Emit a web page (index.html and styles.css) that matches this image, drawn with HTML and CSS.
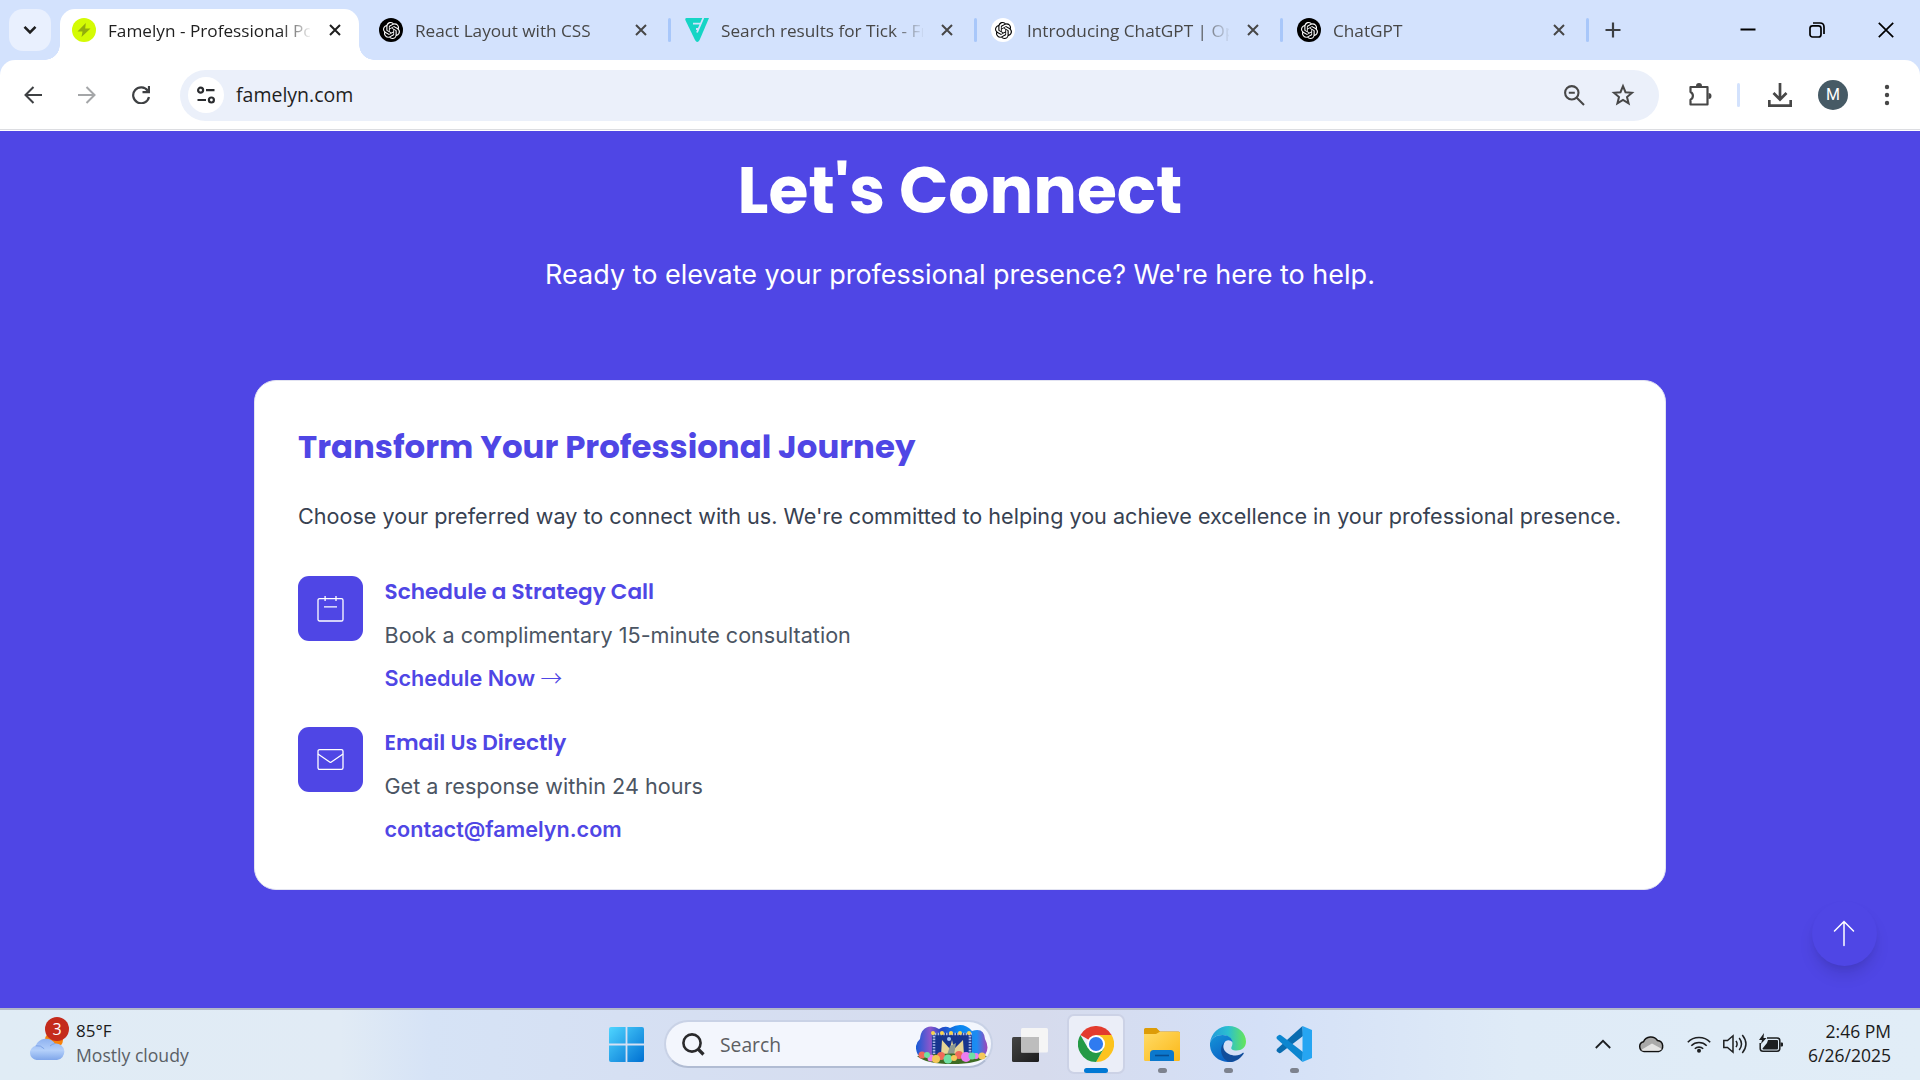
FILE: index.html
```html
<!DOCTYPE html>
<html lang="en">
<head>
<meta charset="utf-8">
<title>Famelyn - Professional Portfolio</title>
<link rel="stylesheet" href="styles.css">
</head>
<body>
<svg class="defs" width="0" height="0">
  <symbol id="knot" viewBox="0 0 24 24"><path fill="currentColor" d="M22.2819 9.8211a5.9847 5.9847 0 0 0-.5157-4.9108 6.0462 6.0462 0 0 0-6.5098-2.9A6.0651 6.0651 0 0 0 4.9807 4.1818a5.9847 5.9847 0 0 0-3.9977 2.9 6.0462 6.0462 0 0 0 .7427 7.0966 5.98 5.98 0 0 0 .511 4.9107 6.051 6.051 0 0 0 6.5146 2.9001A5.9847 5.9847 0 0 0 13.2599 24a6.0557 6.0557 0 0 0 5.7718-4.2058 5.9894 5.9894 0 0 0 3.9977-2.9001 6.0557 6.0557 0 0 0-.7475-7.0729zm-9.022 12.6081a4.4755 4.4755 0 0 1-2.8764-1.0408l.1419-.0804 4.7783-2.7582a.7948.7948 0 0 0 .3927-.6813v-6.7369l2.02 1.1686a.071.071 0 0 1 .038.052v5.5826a4.504 4.504 0 0 1-4.4945 4.4944zm-9.6607-4.1254a4.4708 4.4708 0 0 1-.5346-3.0137l.142.0852 4.783 2.7582a.7712.7712 0 0 0 .7806 0l5.8428-3.3685v2.3324a.0804.0804 0 0 1-.0332.0615L9.74 19.9502a4.4992 4.4992 0 0 1-6.1408-1.6464zM2.3408 7.8956a4.485 4.485 0 0 1 2.3655-1.9728V11.6a.7664.7664 0 0 0 .3879.6765l5.8144 3.3543-2.0201 1.1685a.0757.0757 0 0 1-.071 0l-4.8303-2.7865A4.504 4.504 0 0 1 2.3408 7.872zm16.5963 3.8558L13.1038 8.364 15.1192 7.2a.0757.0757 0 0 1 .071 0l4.8303 2.7913a4.4944 4.4944 0 0 1-.6765 8.1042v-5.6772a.79.79 0 0 0-.407-.667zm2.0107-3.0231l-.142-.0852-4.7735-2.7818a.7759.7759 0 0 0-.7854 0L9.409 9.2297V6.8974a.0662.0662 0 0 1 .0284-.0615l4.8303-2.7866a4.4992 4.4992 0 0 1 6.6802 4.66zM8.3065 12.863l-2.02-1.1638a.0804.0804 0 0 1-.038-.0567V6.0742a4.4992 4.4992 0 0 1 7.3757-3.4537l-.142.0805L8.704 5.459a.7948.7948 0 0 0-.3927.6813zm1.0976-2.3654l2.602-1.4998 2.6069 1.4998v2.9994l-2.5974 1.4997-2.6067-1.4997Z"/></symbol>
  <symbol id="x" viewBox="0 0 12 12"><path d="M1 1l10 10M11 1L1 11" fill="none" stroke="currentColor" stroke-width="2"/></symbol>
</svg>

<header class="tabs">
  <button class="tab-search"><svg width="14" height="10" viewBox="0 0 14 10"><path d="M1.5 1.8L7 7.3l5.500-5.500" fill="none" stroke="#1f1f1f" stroke-width="2.600"/></svg></button>
  <div class="tab active">
    <svg class="fav" viewBox="0 0 24 24"><circle cx="12" cy="12" r="12" fill="#d4fb04"/><path d="M13.800 5L5.500 13.500h5L9.500 19l9-8.500h-5.300z" fill="#93ad0c"/></svg>
    <span class="title">Famelyn - Professional Portfolio</span>
    <svg class="close"><use href="#x"/></svg>
  </div>
  <div class="tab">
    <span class="fav gpt"><svg width="17" height="17"><use href="#knot"/></svg></span>
    <span class="title">React Layout with CSS</span>
    <svg class="close"><use href="#x"/></svg>
  </div>
  <div class="tab">
    <svg class="fav" viewBox="0 0 24 24"><path d="M1.500 0H24L14.600 22q-2.300 4-4.600 0L.3 2Q0 0 1.500 0z" fill="#15d5c5"/><path d="M18.300 0L12 14.500M8 5.600h8.200M11 11h3" fill="none" stroke="#d3e2fd" stroke-width="1.800"/></svg>
    <span class="title">Search results for Tick - Freelancer</span>
    <svg class="close"><use href="#x"/></svg>
  </div>
  <div class="tab">
    <span class="fav gpt light"><svg width="17" height="17"><use href="#knot"/></svg></span>
    <span class="title">Introducing ChatGPT | OpenAI</span>
    <svg class="close"><use href="#x"/></svg>
  </div>
  <div class="tab">
    <span class="fav gpt"><svg width="17" height="17"><use href="#knot"/></svg></span>
    <span class="title">ChatGPT</span>
    <svg class="close"><use href="#x"/></svg>
  </div>
  <svg class="plus" width="16" height="16" viewBox="0 0 16 16"><path d="M8 .5v15M.5 8h15" stroke="#3c3f43" stroke-width="2.200"/></svg>
  <div class="window">
    <svg width="16" height="16" viewBox="0 0 16 16"><path d="M.5 7.500h15" stroke="#000" stroke-width="2"/></svg>
    <svg width="16" height="16" viewBox="0 0 16 16" fill="none" stroke="#000" stroke-width="1.700"><rect x="1" y="3.800" width="11" height="11.200" rx="2.500"/><path d="M4 1h7q4 0 4 4v7"/></svg>
    <svg width="16" height="16" viewBox="0 0 16 16"><path d="M.8.8l14.400 14.400M15.200.8L.8 15.200" stroke="#000" stroke-width="1.700"/></svg>
  </div>
</header>

<nav class="toolbar">
  <div class="nav-buttons">
    <svg width="18" height="18" viewBox="0 0 18 18" fill="none" stroke="#3e4043" stroke-width="2"><path d="M18 9H2M9.500 1L1.500 9l8 8"/></svg>
    <svg width="18" height="18" viewBox="0 0 18 18" fill="none" stroke="#a4a6a8" stroke-width="2"><path d="M0 9h16M8.500 1l8 8-8 8"/></svg>
    <svg width="18" height="18" viewBox="0 0 18 18" fill="none" stroke="#3e4043" stroke-width="2.200"><path d="M15.800 4.800A8 8 0 1 0 17 11"/><path d="M17 0v6.200h-6.500"/></svg>
  </div>
  <div class="omnibox">
    <span class="site"><svg width="18" height="18" viewBox="0 0 18 18" fill="none" stroke="#2a2c2f" stroke-width="2.200"><circle cx="3.600" cy="4.200" r="2.500"/><path d="M9 4.200h8.500M.5 14H9"/><circle cx="14.400" cy="14" r="2.500"/></svg></span>
    <span class="url">famelyn.com</span>
    <svg width="21" height="21" viewBox="0 0 21 21" fill="none" stroke="#474747" stroke-width="2.100"><circle cx="7.800" cy="7.800" r="6.700"/><path d="M12.500 12.500l7.500 7.500M4.800 7.800h6"/></svg>
    <svg class="star" width="24" height="24" viewBox="0 0 24 24" fill="none" stroke="#474747" stroke-width="2"><path d="M12 3.200l2.500 6 6.500.5-5 4.300 1.600 6.400L12 17l-5.600 3.400L8 14 3 9.700l6.500-.5z"/></svg>
  </div>
  <svg class="puzzle" width="26" height="26" viewBox="0 0 26 26"><path d="M4 5h16.500v17.500H3.500v-4.800c3.200-1.500 3.200-6.200 0-7.700V5z" fill="none" stroke="#474747" stroke-width="2.200" stroke-linejoin="round"/><path d="M9 4a3 3 0 0 1 6 0zM21.500 11a3 3 0 0 1 0 6z" fill="#474747"/></svg>
  <i class="bar"></i>
  <svg class="download" width="24" height="24" viewBox="0 0 24 24" fill="none" stroke="#474747" stroke-width="2.700"><path d="M12 0v16M5.500 10l6.500 6.500 6.500-6.500M1.300 17v5.600h21.400V17"/></svg>
  <span class="avatar">M</span>
  <svg class="more" width="6" height="22" viewBox="0 0 6 22" fill="#474747"><circle cx="3" cy="3" r="2.200"/><circle cx="3" cy="11" r="2.200"/><circle cx="3" cy="19" r="2.200"/></svg>
</nav>

<main class="page">
  <h1>Let's Connect</h1>
  <p class="lead">Ready to elevate your professional presence? We're here to help.</p>
  <section class="card">
    <h2>Transform Your Professional Journey</h2>
    <p class="intro">Choose your preferred way to connect with us. We're committed to helping you achieve excellence in your professional presence.</p>
    <div class="option">
      <span class="icon"><svg width="27" height="27" viewBox="0 0 27 27" fill="none" stroke="#fff" stroke-width="1.300"><rect x="1" y="3.600" width="25" height="22.400" rx="1.600"/><path d="M8.100 1v5M19 1v5M7 11.800h13"/></svg></span>
      <div>
        <h3>Schedule a Strategy Call</h3>
        <p>Book a complimentary 15-minute consultation</p>
        <a>Schedule Now <span class="arrow">→</span></a>
      </div>
    </div>
    <div class="option">
      <span class="icon"><svg width="27" height="27" viewBox="0 0 27 27" fill="none" stroke="#fff" stroke-width="1.300"><rect x="1" y="3.600" width="25" height="19.800" rx="1.600"/><path d="M1 8l12 8.200q.5.300 1 0L26 8"/></svg></span>
      <div>
        <h3>Email Us Directly</h3>
        <p>Get a response within 24 hours</p>
        <a>contact@famelyn.com</a>
      </div>
    </div>
  </section>
  <button class="to-top"><svg width="22" height="27" viewBox="0 0 22 27" fill="none" stroke="#fff" stroke-width="1.500" stroke-linecap="round"><path d="M11 1.500v24M1.500 11L11 1.500l9.500 9.500"/></svg></button>
</main>

<footer class="taskbar">
  <div class="weather">
    <div class="weather-icon">
      <svg width="36" height="28" viewBox="0 0 36 28"><defs><linearGradient id="cl" x2="0" y2="1"><stop stop-color="#8fb2f0"/><stop offset=".55" stop-color="#b4d0fa"/><stop offset="1" stop-color="#7fa6ea"/></linearGradient></defs><circle cx="25" cy="8" r="9" fill="#f7820c"/><path d="M7.500 28a7.200 7.200 0 0 1-.8-14.200A11 11 0 0 1 26 11.500 8.300 8.300 0 0 1 28 28z" fill="url(#cl)"/><path d="M6.700 13.800q5-1 8.500 3M21 14q2-2 5-2.500" fill="none" stroke="#7da3e8"/></svg>
      <span class="badge">3</span>
    </div>
    <div class="weather-text"><b>85°F</b><span>Mostly cloudy</span></div>
  </div>

  <div class="apps">
    <svg class="start" width="35" height="35" viewBox="0 0 35 35"><defs><linearGradient id="w" x2="1" y2="1"><stop stop-color="#4fd5ff"/><stop offset="1" stop-color="#0070d2"/></linearGradient></defs><path d="M2 0h14.600v16.600H0V2q0-2 2-2zM18.400 0H33q2 0 2 2v14.600H18.400zM0 18.400h16.600V35H2q-2 0-2-2zM18.400 18.400H35V33q0 2-2 2H18.400z" fill="url(#w)"/></svg>
    <div class="search">
      <svg width="23" height="23" viewBox="0 0 23 23" fill="none" stroke="#2a2a2c" stroke-width="2.600"><circle cx="10" cy="10" r="8.600"/><path d="M16 16l5.500 5.500" stroke-width="3.200"/></svg>
      <span>Search</span>
      <svg class="festival" width="72" height="39" viewBox="0 0 72 39"><defs><linearGradient id="f"><stop stop-color="#155bd6"/><stop offset=".2" stop-color="#8b56cc"/><stop offset=".35" stop-color="#2545c4"/><stop offset=".6" stop-color="#0786f0"/><stop offset=".85" stop-color="#1d8cf2"/><stop offset="1" stop-color="#a144b8"/></linearGradient></defs>
        <path d="M2 30Q-3 20 4 14 5 2 15 1.500q5 0 8 2.500 6-4 11-1Q47-4 56 6q12-4 13 8 5 9 0 16z" fill="url(#f)"/>
        <path d="M16 8h40v24H16z" fill="#17358e"/><path d="M18 8v23M54 8v23M16 9h40" stroke="#a8b8e6" stroke-width="2.600" stroke-dasharray="1.600 1.200"/>
        <path d="M26 15l8 9 2-9 2 9 9-9 1 15H25z" fill="#e6d596"/><path d="M34 21l6-3-2 12h-7z" fill="#8d9a91"/><circle cx="33" cy="14" r="2" fill="#a5c5ef"/>
        <g fill="#f8d34c"><circle cx="17" cy="8" r="2"/><circle cx="26" cy="8" r="2"/><circle cx="35" cy="8" r="2"/><circle cx="44" cy="8" r="2"/><circle cx="53" cy="8" r="2"/></g>
        <path d="M1 31q35-5 70 0-9 8-35 8T1 31z" fill="#3f6b24"/>
        <g fill="#f06a5a"><circle cx="6" cy="30" r="3.500"/><circle cx="25" cy="31" r="4"/><circle cx="43" cy="30" r="4"/></g><g fill="#ec7df0"><circle cx="15" cy="33" r="3.500"/><circle cx="50" cy="32" r="5"/><circle cx="60" cy="31" r="3"/></g><g fill="#6fe0a3"><circle cx="11" cy="30" r="3"/><circle cx="32" cy="34" r="4.500"/><circle cx="56" cy="31" r="3.500"/></g><g fill="#f5c85a"><circle cx="20" cy="34" r="4"/><circle cx="38" cy="33" r="3"/><circle cx="66" cy="31" r="3.500"/></g>
      </svg>
    </div>
    <svg class="taskview" width="36" height="34" viewBox="0 0 36 34"><defs><linearGradient id="tv" x2="1" y2="1"><stop stop-color="#444"/><stop offset="1" stop-color="#1c1c1c"/></linearGradient></defs><rect y="9" width="27" height="25" rx="1.500" fill="url(#tv)"/><rect x="9" width="27" height="24.500" rx="1.500" fill="#f5f5f5"/><path d="M9 9h18v15.500H9z" fill="#bdbdbd"/></svg>
    <div class="app current"><svg width="36" height="36" viewBox="0 0 36 36"><path d="M18 18L2.410 9A18 18 0 0 1 33.600 9z" fill="#e33b2e"/><path d="M18 9h15.600A18 18 0 0 1 18 36l7.800-13.500z" fill="#fcc31e"/><path d="M2.410 9A18 18 0 0 0 18 36l7.800-13.500L18 18l-7.800 4.500z" fill="#259a46"/><circle cx="18" cy="18" r="9" fill="#fff"/><circle cx="18" cy="18" r="7.100" fill="#2f7bf0"/></svg><i></i></div>
    <div class="app"><svg width="36" height="33" viewBox="0 0 36 33"><defs><linearGradient id="fo" x2="1" y2="1"><stop stop-color="#ffdb66"/><stop offset="1" stop-color="#fbb818"/></linearGradient></defs><path d="M0 8V1.500Q0 0 1.500 0h11L16 3.500h18.500q1.500 0 1.500 1.500v3z" fill="#dd9c07"/><path d="M0 6h12l3.500-2H35q1 0 1 1v26.500q0 1.500-1.500 1.500h-33Q0 33 0 31.500z" fill="url(#fo)"/><path d="M6 33v-7.500q0-3.500 3.500-3.500h17q3.500 0 3.500 3.500V33z" fill="#0b78cd"/><path d="M11 27.500h14" stroke="#074d91" stroke-width="1.600"/></svg><i></i></div>
    <div class="app"><svg width="36" height="36" viewBox="0 0 36 36"><defs><linearGradient id="e1"><stop stop-color="#2399dc"/><stop offset=".5" stop-color="#2bbfd0"/><stop offset="1" stop-color="#66e657"/></linearGradient><linearGradient id="e2" x2=".6" y2="1"><stop stop-color="#1595d8"/><stop offset="1" stop-color="#0a5fc4"/></linearGradient></defs><path d="M0 17C1 7 9 0 18.500 0 29 0 36 7.500 36 15.500 36 21.500 31.500 24.500 26.500 24.500c-4 0-6-1.500-5-3.500 3-5-1-12-9-12C6 9 1.500 12.500 0 17z" fill="url(#e1)"/><path d="M0 17c1.500-4.500 6-8 12.500-8 6 0 10 3.500 10 7.500-2-3-7-3-8.500 1-3 8 4 17 11 17.500C13 39-1 31 0 17z" fill="url(#e2)"/><path d="M15 15.500c-5 5 .5 14 10.500 14 3 0 5.500-1.200 7-2.500 1-.8 1.700 0 1 1C29.500 34 24 36 20 36 11 34 8 21 15 15.500z" fill="#114d9b"/></svg><i></i></div>
    <div class="app"><svg width="36" height="36" viewBox="0 0 36 36"><path d="M26.500 0L1.500 22.500q-2 2 0 3.500l1.500 1q1 .5 2-.2L27 10z" fill="#0a6cb0"/><path d="M26.500 36L1.500 13.500q-2-2 0-3.500L3 9q1-.5 2 .2L27 26z" fill="#0c86d0"/><path d="M26.500 0L36 4v28l-9.500 4z" fill="#26a5f2"/></svg><i></i></div>
  </div>

  <div class="tray">
    <svg width="16" height="10" viewBox="0 0 16 10"><path d="M.8 9L8 1.800 15.200 9" fill="none" stroke="#1d1f21" stroke-width="1.800"/></svg>
    <svg class="cloud" width="26" height="18" viewBox="0 0 26 18"><path d="M6 16.500a5 5 0 0 1-.5-9.800 8 8 0 0 1 14-1.200A5.600 5.600 0 0 1 20.500 16.500z" fill="#a9a9a9" stroke="#111" stroke-width="1.500"/><path d="M3 15l11-6.500L24 14q-2 2-4 1.800H5z" fill="#e3e3e3"/></svg>
    <svg class="wifi" width="24" height="18" viewBox="0 0 24 18" fill="none" stroke="#1d1f21" stroke-width="1.600"><path d="M.8 7.200a15.700 15.700 0 0 1 22.400 0M4.300 10.700a10.800 10.800 0 0 1 15.400 0M7.800 13.800a6 6 0 0 1 8.400 0"/><circle cx="12" cy="15.700" r="2" fill="#1d1f21" stroke="none"/></svg>
    <svg class="sound" width="25" height="20" viewBox="0 0 25 20" fill="none" stroke="#1d1f21" stroke-width="1.500"><path d="M.8 6.500h3.700L10 1.800v16.400l-5.500-4.700H.8zM13 6.800q2.200 3.200 0 6.400M16.200 4q4.600 6 0 12M19.300 1q7.300 9 0 18"/></svg>
    <svg class="battery" width="24" height="20" viewBox="0 0 24 20"><path d="M8 5h10q2.800 0 2.800 2.800v7.700q0 2.800-2.800 2.800H4q-2.800 0-2.800-2.800V10" fill="none" stroke="#1d1f21" stroke-width="1.500"/><path d="M9 7h9q1 0 1 1v7.500q0 1-1 1H4.500q-1 0-1-1L8 10z" fill="#1d1f21"/><path d="M21.500 9.500H23q1 0 1 1v2q0 1-1 1h-1.500zM5 0L0 7h3l-1 4 5.500-6H4.500z" fill="#1d1f21"/></svg>
    <div class="clock"><span>2:46 PM</span><span>6/26/2025</span></div>
  </div>
</footer>
</body>
</html>
```
FILE: styles.css
```css
* { box-sizing: border-box; }
body {
  margin: 0;
  width: 1920px;
  height: 1080px;
  overflow: hidden;
  display: flex;
  flex-direction: column;
  background: #d3e2fd;
  font-family: "Segoe UI", "Open Sans", "Noto Sans", sans-serif;
}
h1, h2, h3, p { margin: 0; }
button { border: 0; padding: 0; display: grid; place-items: center; }
svg { display: block; flex: none; }
.defs { position: absolute; }

/* Tab strip */
.tabs {
  height: 60px;
  flex: none;
  display: flex;
  align-items: flex-end;
}
.tab-search {
  width: 42px;
  height: 42px;
  margin: 0 9px 9px;
  border-radius: 14px;
  background: #e9f0fe;
}
.tab {
  position: relative;
  width: 306px;
  height: 51px;
  padding: 0 20px 9px 12px;
  display: flex;
  align-items: center;
  color: #474747;
}
.tab.active {
  width: 299px;
  margin-right: 8px;
  padding-right: 19px;
  border-radius: 15px 15px 0 0;
  background: #fff;
  color: #1f1f1f;
}
.tab.active::before, .tab.active::after {
  content: "";
  position: absolute;
  bottom: 0;
  width: 15px;
  height: 15px;
}
.tab.active::before { left: -15px; background: radial-gradient(circle at 0 0, transparent 14.500px, #fff 15px); }
.tab.active::after { right: -15px; background: radial-gradient(circle at 100% 0, transparent 14.500px, #fff 15px); }
.tab:not(.active)::after {
  content: "";
  position: absolute;
  right: 2px;
  top: 9px;
  width: 3px;
  height: 24px;
  border-radius: 2px;
  background: #a8c7fa;
}
.fav { width: 24px; height: 24px; flex: none; }
.gpt {
  display: grid;
  place-items: center;
  border-radius: 50%;
  background: #000;
  color: #fff;
}
.gpt.light { background: #fff; color: #000; }
.title {
  flex: none;
  width: 202px;
  margin: 2px 18px 0 12px;
  overflow: hidden;
  white-space: nowrap;
  font-size: 17.200px;
  line-height: 24px;
  -webkit-mask-image: linear-gradient(90deg, #000 172px, transparent 204px);
  mask-image: linear-gradient(90deg, #000 172px, transparent 204px);
}
.active .title { margin-right: 19px; }
.close { width: 12px; height: 12px; }
.plus { margin: 0 0 22px 14px; }
.window { margin: 0 26px 22px auto; display: flex; gap: 53px; }

/* Toolbar */
.toolbar {
  height: 71px;
  flex: none;
  display: flex;
  align-items: center;
  padding: 0 30px 1px 24px;
  background: linear-gradient(#dcdde1, #dcdde1) 0 69px / 100% 1px no-repeat, #fff;
  border-radius: 15px 15px 0 0;
}
.nav-buttons { display: flex; gap: 36px; }
.omnibox {
  width: 1479px;
  height: 51px;
  margin-left: 30px;
  padding: 0 24px 0 8px;
  display: flex;
  align-items: center;
  border-radius: 26px;
  background: #ebf0fa;
}
.site {
  width: 36px;
  height: 36px;
  display: grid;
  place-items: center;
  border-radius: 50%;
  background: #fff;
}
.url { flex: 1; margin: -2px 0 0 12px; font-size: 19.500px; color: #1f1f1f; }
.star { margin-left: 26px; }
.puzzle { margin-left: 28px; }
.bar { width: 3px; height: 24px; margin-left: 24px; border-radius: 2px; background: #d3e2fd; }
.download { margin-left: 28px; }
.avatar {
  width: 30px;
  height: 30px;
  margin-left: 26px;
  border-radius: 50%;
  background: #465a65;
  color: #fff;
  font: 400 16px/30px Roboto, sans-serif;
  text-align: center;
}
.more { margin-left: auto; }

/* Page */
.page {
  position: relative;
  height: 877px;
  flex: none;
  background: #4f46e5;
  font-family: Inter, sans-serif;
  font-size: 21.600px;
  color: #fff;
}
h1, h2, h3 { font-family: Poppins, Inter, sans-serif; }
h1 {
  padding-top: 16px;
  font-size: 64.800px;
  font-weight: 700;
  line-height: 88px;
  text-align: center;
}
.lead {
  margin-top: 21px;
  font-size: 27px;
  line-height: 38px;
  text-align: center;
}
.card {
  width: 1412px;
  height: 510px;
  margin: 86px auto 0;
  padding: 42px 43px 0;
  border: 1px solid #e2e3f2;
  border-radius: 22px;
  background: #fff;
  color: #4f46e5;
}
h2 { font-size: 32.400px; line-height: 48px; }
.intro { margin: 28px 0 42px; line-height: 35px; color: #374151; white-space: nowrap; }
.option { display: flex; gap: 21.500px; height: 151px; }
.icon {
  width: 65px;
  height: 65px;
  flex: none;
  display: grid;
  place-items: center;
  border-radius: 11px;
  background: #4f46e5;
}
h3 { font-size: 21.600px; font-weight: 600; line-height: 32px; }
.option p { margin: 10px 0 8px; line-height: 35px; color: #4b5563; }
.option a { display: block; height: 35px; line-height: 35px; font-weight: 600; }
.arrow { font-family: "Noto Sans CJK SC", sans-serif; font-weight: 300; line-height: 20px; }
.to-top {
  position: absolute;
  right: 43.500px;
  bottom: 42px;
  width: 65px;
  height: 65px;
  border-radius: 50%;
  background: #4f46e5;
  box-shadow: 0 11px 17px -3px rgba(0, 0, 0, .12), 0 4px 7px -2px rgba(0, 0, 0, .06);
}

/* Taskbar */
.taskbar {
  height: 72px;
  flex: none;
  display: grid;
  grid-template-columns: 609px 1fr auto;
  border-top: 2px solid #b2b8c8;
  background: linear-gradient(90deg, #e0ecf5 0, #e1ebf5 340px, #d6e3f6 430px, #d6e0f3 620px, #d6dbed 1040px, #d4e0f7 1260px, #dfebf7 1520px, #e1edf7);
}
.weather { display: flex; padding-left: 29px; gap: 11px; }
.weather-icon { position: relative; width: 36px; height: 50px; padding-top: 22px; }
.badge {
  position: absolute;
  left: 16px;
  top: 7px;
  width: 24px;
  height: 24px;
  border-radius: 50%;
  background: #c42b1c;
  color: #fff;
  font-size: 16px;
  line-height: 24px;
  text-align: center;
}
.weather-text { display: flex; flex-direction: column; padding-top: 9px; font-size: 17.600px; line-height: 24px; color: #5a5f65; }
.weather-text b { font-weight: 400; font-size: 17px; color: #1b1b1b; }
.apps { display: flex; align-items: center; height: 69px; }
.search {
  width: 329px;
  height: 48px;
  margin: -1px 0 0 20px;
  padding: 0 3px 0 16px;
  display: flex;
  align-items: center;
  border: 2px solid #c9d2e6;
  border-bottom-color: #b1bcd3;
  border-radius: 24px;
  background: #f3f6fd;
}
.search span { margin-left: 15px; font-size: 19.300px; color: #5d5f63; }
.festival { margin-left: auto; }
.taskview { margin: 0 19px 0 19px; }
.app {
  position: relative;
  width: 58px;
  height: 60px;
  margin: -1px 8px 0 0;
  display: grid;
  place-items: center;
  border: 2px solid transparent;
  border-radius: 7px;
}
.app.current { background: #ebeef8; border-color: #ccd2e6; }
.app i {
  position: absolute;
  bottom: -1px;
  left: 50%;
  width: 9px;
  height: 5px;
  margin-left: -4.500px;
  border-radius: 3px;
  background: #7d828e;
}
.app.current i { width: 24px; margin-left: -12px; background: #0078d4; }
.tray { display: flex; align-items: center; height: 68px; padding-right: 29px; }
.cloud { margin-left: 27px; }
.wifi { margin-left: 23px; }
.sound { margin-left: 12px; }
.battery { margin: -3px 0 0 11px; }
.clock {
  width: 108px;
  margin-top: -2px;
  display: flex;
  flex-direction: column;
  font-size: 17.500px;
  line-height: 24px;
  text-align: right;
  color: #1b1b1b;
}
```
